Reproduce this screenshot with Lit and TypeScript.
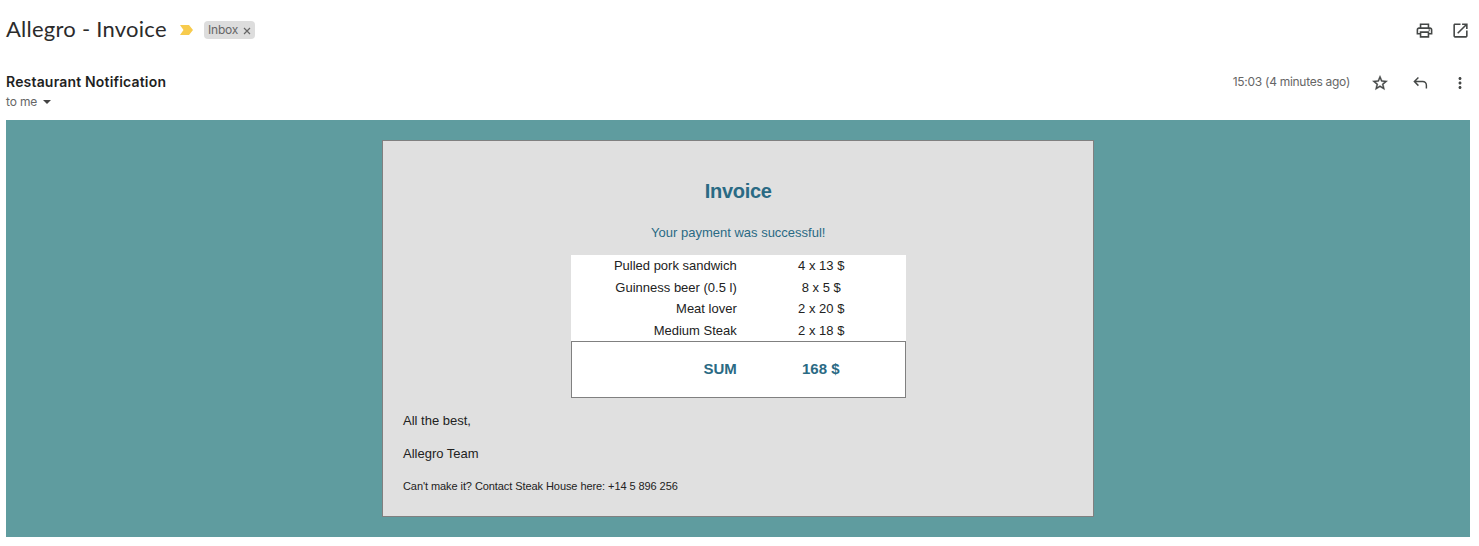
import { LitElement, html, css } from "lit";
import { customElement } from "lit/decorators.js";

const items = [
  ["Pulled pork sandwich", "4 x 13 $"],
  ["Guinness beer (0.5 l)", "8 x 5 $"],
  ["Meat lover", "2 x 20 $"],
  ["Medium Steak", "2 x 18 $"],
];

@customElement("invoice-mail")
class InvoiceMail extends LitElement {
  static styles = css`
    :host { display: block; }
    * { box-sizing: border-box; }
    .backdrop { height: 417px; padding: 20px 0; background: #5f9c9f; display: flex; justify-content: center; }
    .card { width: 712px; height: 377px; margin-right: 1px; border: 1px solid #808080; background: #e0e0e0; padding: 0 19px 0 20.5px; font: 13px/20px "Liberation Sans", Arial, sans-serif; color: #222; }
    .heading { margin: 38px 0 0; font-size: 20px; line-height: 24px; letter-spacing: -0.3px; color: #2a6a84; text-align: center; }
    .lead { margin: 20px 0 0; color: #2a6a84; text-align: center; }
    .bill { width: 335px; margin: 12px auto 0; background: #fff; }
    .row { display: grid; grid-template-columns: 166px 1fr; height: 21.6px; line-height: 21.6px; }
    .name { text-align: right; }
    .amount { text-align: center; }
    .sum { height: 57px; line-height: 54px; border: 1px solid #808080; grid-template-columns: 165px 1fr; font-size: 15px; font-weight: bold; color: #2a6a84; }
    .line { margin: 13px 0 0; }
    .small { margin-top: 12px; font-size: 11px; letter-spacing: -0.075px; }
  `;
  render() {
    return html`<div class="backdrop"><div class="card">
      <h2 class="heading">Invoice</h2>
      <p class="lead">Your payment was successful!</p>
      <div class="bill">
        ${items.map(([n, a]) => html`<div class="row"><span class="name">${n}</span><span class="amount">${a}</span></div>`)}
        <div class="row sum"><span class="name">SUM</span><span class="amount">168 $</span></div>
      </div>
      <p class="line">All the best,</p>
      <p class="line">Allegro Team</p>
      <p class="line small">Can't make it? Contact Steak House here: +14 5 896 256</p>
    </div></div>`;
  }
}

@customElement("app-root")
class AppRoot extends LitElement {
  static styles = css`
    :host { display: block; height: 546px; background: #fff; overflow: hidden; padding: 0 9px 0 6px; box-sizing: border-box; }
    * { box-sizing: border-box; }
    .top { display: flex; height: 60px; align-items: center; }
    .title { margin: 0; padding-bottom: 2px; width: 174px; font: 400 22px/28px Lato, sans-serif; letter-spacing: 0.25px; color: #2b2b2b; white-space: nowrap; }
    .marker { width: 13px; height: 10px; display: block; }
    .chip { margin-left: 11px; width: 51px; height: 18px; border-radius: 4px; background: #ddd; color: #666; font: 12px/18px Inter, sans-serif; letter-spacing: -0.2px; display: flex; align-items: center; padding: 0 4px; justify-content: space-between; }
    .close { width: 8px; height: 8px; margin-top: 1px; display: block; }
    .grow { flex: 1; }
    .icon { width: 19px; height: 19px; display: block; fill: #444746; flex: none; }
    .tools { display: flex; }
    .top .tools { gap: 17px; }
    .meta { display: flex; height: 60px; padding-top: 12px; }
    .sender { font: 600 14px/20px Inter, sans-serif; letter-spacing: 0.18px; color: #1f1f1f; white-space: nowrap; }
    .to { display: flex; align-items: center; gap: 6px; font: 12px/20px Inter, sans-serif; letter-spacing: -0.15px; color: #666; }
    .caret { width: 8px; height: 4px; display: block; fill: #444; }
    .time { font: 12px/20px Inter, sans-serif; letter-spacing: -0.28px; color: #666; margin-right: 21px; white-space: nowrap; }
    .meta .tools { gap: 22px; padding-top: 2px; margin-right: 1px; }
    .meta .icon { width: 18px; height: 18px; }
  `;
  render() {
    return html`
      <header class="top">
        <h1 class="title">Allegro - Invoice</h1>
        <svg class="marker" viewBox="0 0 13 10"><path fill="#f7cb4d" d="M0 0h9l4 5-4 5H0l3.5-5z"/></svg>
        <span class="chip"><span>Inbox</span><svg class="close" viewBox="0 0 8 8"><path d="M1 1l6 6M7 1L1 7" stroke="#666" stroke-width="1.2"/></svg></span>
        <span class="grow"></span>
        <span class="tools">
          <svg class="icon" viewBox="0 0 24 24"><path d="M19 8h-1V3H6v5H5c-1.66 0-3 1.34-3 3v6h4v4h12v-4h4v-6c0-1.66-1.34-3-3-3zM8 5h8v3H8V5zm8 14H8v-4h8v4zm2-4v-2H6v2H4v-4c0-.55.45-1 1-1h14c.55 0 1 .45 1 1v4h-2z"/><circle cx="18" cy="11.5" r="1"/></svg>
          <svg class="icon" viewBox="0 0 24 24"><path d="M19 19H5V5h7V3H5c-1.11 0-2 .9-2 2v14c0 1.1.89 2 2 2h14c1.1 0 2-.9 2-2v-7h-2v7zM14 3v2h3.59l-9.83 9.83 1.41 1.41L19 6.41V10h2V3h-7z"/></svg>
        </span>
      </header>
      <section class="meta">
        <div><div class="sender">Restaurant Notification</div>
          <div class="to">to me <svg class="caret" viewBox="0 0 8 4"><path d="M0 0h8L4 4z"/></svg></div></div>
        <span class="grow"></span>
        <span class="time">15:03 (4 minutes ago)</span>
        <span class="tools">
          <svg class="icon" viewBox="0 0 24 24"><path stroke="#444746" stroke-width=".5" d="M22 9.24l-7.19-.62L12 2 9.19 8.63 2 9.24l5.46 4.73L5.82 21 12 17.27 18.18 21l-1.63-7.03L22 9.24zM12 15.4l-3.76 2.27 1-4.28-3.32-2.88 4.38-.38L12 6.1l1.71 4.04 4.38.38-3.32 2.88 1 4.28L12 15.4z"/></svg>
          <svg class="icon" viewBox="0 0 20 20"><path d="M16.3 16v-3.5a3.3 3.3 0 0 0-3.3-3.3H5.7l3.1 3.1-1.1 1.2-5.1-5.1 5.1-5.1 1.1 1.2-3.1 3H13a4.9 4.9 0 0 1 4.9 5V16z"/></svg>
          <svg class="icon" viewBox="0 0 24 24"><path d="M12 8c1.1 0 2-.9 2-2s-.9-2-2-2-2 .9-2 2 .9 2 2 2zm0 2c-1.1 0-2 .9-2 2s.9 2 2 2 2-.9 2-2-.9-2-2-2zm0 6c-1.1 0-2 .9-2 2s.9 2 2 2 2-.9 2-2-.9-2-2-2z"/></svg>
        </span>
      </section>
      <invoice-mail></invoice-mail>`;
  }
}
